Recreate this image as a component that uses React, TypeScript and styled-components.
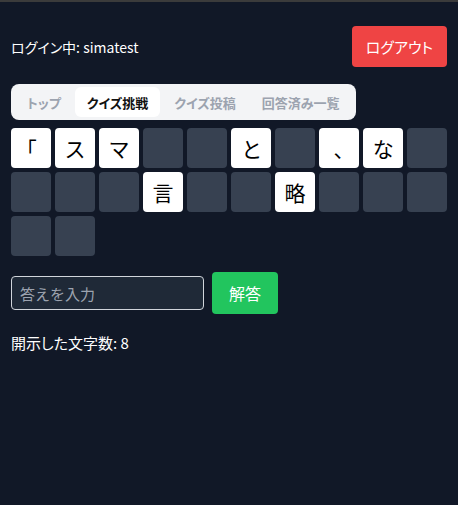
import React from "react";
import styled, { createGlobalStyle } from "styled-components";

const Global = createGlobalStyle`
  html, body { margin: 0; padding: 0; background: #111827; }
  body {
    font-family: "Noto Sans CJK JP", "Noto Sans", sans-serif;
    font-feature-settings: "palt";
    color: #ffffff;
    min-height: 505px;
    border-top: 2px solid #3b3b3b;
    box-sizing: border-box;
  }
  * { box-sizing: border-box; }
`;

const Page = styled.div`
  padding: 24px 11px 0 11px;
  display: flex;
  flex-direction: column;
`;

const Header = styled.div`
  display: flex;
  align-items: center;
  justify-content: space-between;
  height: 41px;
`;

const LoginText = styled.span`
  font-size: 14px;
`;

const Button = styled.button<{ $green?: boolean }>`
  background: ${(p) => (p.$green ? "#22c55e" : "#ef4444")};
  color: #fff;
  border: none;
  border-radius: 4px;
  height: ${(p) => (p.$green ? "42px" : "41px")};
  padding: 0 ${(p) => (p.$green ? "17px" : "14px")};
  font-family: inherit;
  font-feature-settings: "palt";
  font-size: ${(p) => (p.$green ? "16px" : "15px")};
  cursor: pointer;
`;

const Tabs = styled.div`
  margin-top: 17px;
  align-self: flex-start;
  display: inline-flex;
  gap: 2px;
  padding: 3px 4px;
  background: #f3f4f6;
  border-radius: 8px;
`;

const Tab = styled.div<{ $active?: boolean }>`
  height: 30px;
  padding: 0 12px;
  display: flex;
  align-items: center;
  border-radius: 6px;
  font-size: 13px;
  font-weight: 700;
  background: ${(p) => (p.$active ? "#ffffff" : "transparent")};
  color: ${(p) => (p.$active ? "#111111" : "#9ca3af")};
`;

const Grid = styled.div`
  margin-top: 8px;
  display: grid;
  grid-template-columns: repeat(10, 40px);
  grid-auto-rows: 40px;
  gap: 4px;
`;

const Cell = styled.div<{ $open: boolean }>`
  border-radius: 4px;
  background: ${(p) => (p.$open ? "#ffffff" : "#374151")};
  color: #000;
  display: flex;
  align-items: center;
  justify-content: center;
  font-size: 21px;
`;

const AnswerRow = styled.div`
  margin-top: 16px;
  display: flex;
  align-items: center;
  gap: 8px;
`;

const Input = styled.input`
  width: 193px;
  height: 34px;
  background: #1f2937;
  border: 1px solid #d1d5db;
  border-radius: 4px;
  padding: 0 8px;
  color: #fff;
  font-family: inherit;
  font-size: 15px;
  &::placeholder { color: #9ca3af; }
`;

const Count = styled.div`
  margin-top: 18px;
  font-size: 15px;
`;

const cells: (string | null)[] = [
  "「", "ス", "マ", null, null, "と", null, "、", "な", null,
  null, null, null, "言", null, null, "略", null, null, null,
  null, null,
];

export default function App() {
  return (
    <>
      <Global />
      <Page>
        <Header>
          <LoginText>ログイン中: simatest</LoginText>
          <Button>ログアウト</Button>
        </Header>
        <Tabs>
          <Tab>トップ</Tab>
          <Tab $active>クイズ挑戦</Tab>
          <Tab>クイズ投稿</Tab>
          <Tab>回答済み一覧</Tab>
        </Tabs>
        <Grid>
          {cells.map((c, i) => (
            <Cell key={i} $open={c !== null}>{c}</Cell>
          ))}
        </Grid>
        <AnswerRow>
          <Input placeholder="答えを入力" />
          <Button $green>解答</Button>
        </AnswerRow>
        <Count>開示した文字数: 8</Count>
      </Page>
    </>
  );
}
